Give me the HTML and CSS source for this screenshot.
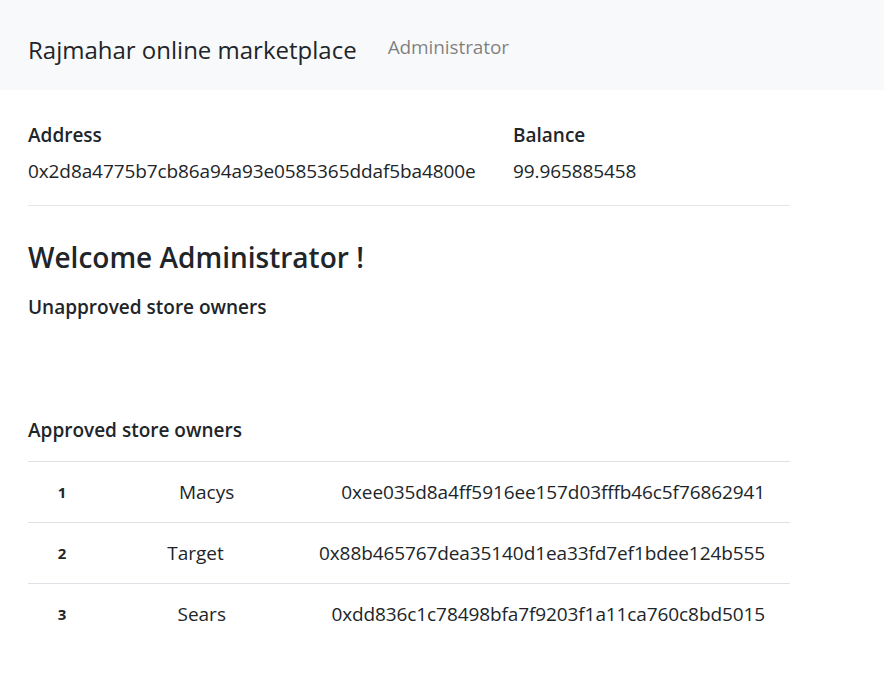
FILE: index.html
```html
<!DOCTYPE html>
<html lang="en">
<head>
<meta charset="utf-8">
<title>Rajmahar online marketplace</title>
<link rel="stylesheet" href="styles.css">
</head>
<body>
<nav class="navbar">
  <a class="brand" href="#">Rajmahar online marketplace</a>
  <a class="nav-link" href="#">Administrator</a>
</nav>
<main class="container">
  <section class="account">
    <div class="account-col address-col">
      <div class="label">Address</div>
      <div class="value">0x2d8a4775b7cb86a94a93e0585365ddaf5ba4800e</div>
    </div>
    <div class="account-col">
      <div class="label">Balance</div>
      <div class="value">99.965885458</div>
    </div>
  </section>
  <hr class="divider">
  <h4 class="welcome">Welcome Administrator !</h4>
  <h6 class="section-title unapproved">Unapproved store owners</h6>
  <h6 class="section-title approved">Approved store owners</h6>
  <div class="owners">
    <div class="owner-row">
      <div class="num">1</div>
      <div class="name">Macys</div>
      <div class="addr">0xee035d8a4ff5916ee157d03fffb46c5f76862941</div>
    </div>
    <div class="owner-row">
      <div class="num">2</div>
      <div class="name">Target</div>
      <div class="addr">0x88b465767dea35140d1ea33fd7ef1bdee124b555</div>
    </div>
    <div class="owner-row">
      <div class="num">3</div>
      <div class="name">Sears</div>
      <div class="addr">0xdd836c1c78498bfa7f9203f1a11ca760c8bd5015</div>
    </div>
  </div>
</main>
</body>
</html>
```

FILE: styles.css
```css
* { box-sizing: border-box; }
html, body { margin: 0; padding: 0; }
body {
  font-family: "Open Sans", "Noto Sans", sans-serif;
  font-size: 19px;
  line-height: 30px;
  color: #212529;
  background: #fff;
}
a { text-decoration: none; }

.navbar {
  height: 90px;
  background: #f8f9fa;
  display: flex;
  align-items: flex-start;
  padding: 31px 0 0 28px;
}
.brand {
  font-size: 24px;
  line-height: 37px;
  color: #212529;
}
.nav-link {
  margin-left: 31px;
  padding-top: 1px;
  font-size: 19px;
  line-height: 30px;
  letter-spacing: -0.1px;
  color: rgba(0, 0, 0, 0.5);
}

.container {
  width: 790px;
  padding-left: 28px;
}

.account {
  display: flex;
  padding-top: 30px;
}
.address-col { width: 485px; }
.label {
  font-weight: 600;
  margin-bottom: 6px;
}
.value { letter-spacing: -0.1px; }
.divider {
  margin: 19px 0 0;
  border: 0;
  border-top: 1px solid #e6e6e6;
}
.welcome {
  margin: 33px 0 0;
  font-size: 28px;
  line-height: 36px;
  font-weight: 600;
}
.section-title {
  margin: 0;
  font-size: 19px;
  line-height: 24px;
  font-weight: 600;
}
.unapproved { margin-top: 20px; }
.approved { margin-top: 99px; }

.owners { margin-top: 19px; }
.owner-row {
  display: flex;
  justify-content: space-between;
  align-items: center;
  border-top: 1px solid #dee2e6;
  padding: 15px 25px 15px 24px;
}
.num {
  width: 20px;
  text-align: center;
  font-weight: 700;
  font-size: 15px;
}
.addr { letter-spacing: -0.1px; }
```
